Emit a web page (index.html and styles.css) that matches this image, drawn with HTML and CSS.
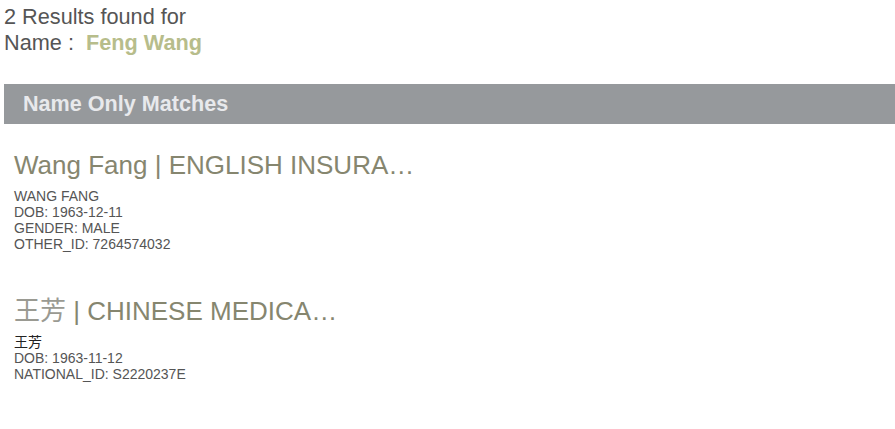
FILE: index.html
```html
<!DOCTYPE html>
<html>
<head>
<meta charset="utf-8">
<link rel="stylesheet" href="styles.css">
</head>
<body>
<div class="page">
  <div class="summary">
    <div class="summary-line">2 Results found for</div>
    <div class="summary-line">Name :&nbsp; <span class="query">Feng Wang</span></div>
  </div>
  <div class="section-bar">Name Only Matches</div>
  <div class="results">
    <div class="result">
      <div class="result-title">Wang Fang | ENGLISH INSURA…</div>
      <div class="result-details">
        <div>WANG FANG</div>
        <div>DOB: 1963-12-11</div>
        <div>GENDER: MALE</div>
        <div>OTHER_ID: 7264574032</div>
      </div>
    </div>
    <div class="result">
      <div class="result-title"><span class="cjk-title">王芳</span> | CHINESE MEDICA…</div>
      <div class="result-details">
        <div class="cjk">王芳</div>
        <div>DOB: 1963-11-12</div>
        <div>NATIONAL_ID: S2220237E</div>
      </div>
    </div>
  </div>
</div>
</body>
</html>
```
FILE: styles.css
```css
html, body {
  margin: 0;
  padding: 0;
  background: #ffffff;
}
body {
  font-family: "Liberation Sans", Arial, "Noto Sans CJK SC", sans-serif;
  color: #555555;
}
.page {
  padding: 4px 0 0 4px;
}
.summary {
  font-size: 21.7px;
  line-height: 26px;
  color: #555555;
}
.query {
  font-weight: bold;
  color: #b7bd8b;
}
.section-bar {
  margin-top: 28px;
  height: 40px;
  line-height: 40px;
  background: #96999c;
  color: #e8e9ec;
  font-weight: bold;
  font-size: 21.6px;
  padding-left: 19px;
}
.results {
  padding: 23px 0 0 10px;
}
.result {
  margin-bottom: 41px;
}
.result-title {
  font-size: 26px;
  line-height: 36px;
  color: #86866f;
}
.cjk-title {
  color: #9a9a92;
}
.result-details {
  margin-top: 5px;
  font-size: 14px;
  line-height: 16px;
  color: #555555;
}
.cjk {
  color: #222222;
}
```
